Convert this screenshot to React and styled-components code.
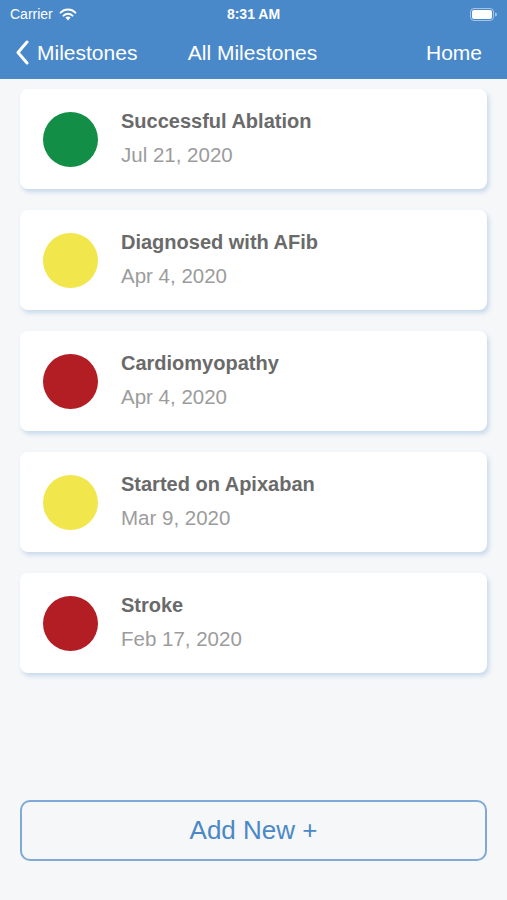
import React from "react";
import styled, { createGlobalStyle } from "styled-components";

const milestones = [
  { title: "Successful Ablation", date: "Jul 21, 2020", color: "#138e47" },
  { title: "Diagnosed with AFib", date: "Apr 4, 2020", color: "#f1e64b" },
  { title: "Cardiomyopathy", date: "Apr 4, 2020", color: "#b21e23" },
  { title: "Started on Apixaban", date: "Mar 9, 2020", color: "#f1e64b" },
  { title: "Stroke", date: "Feb 17, 2020", color: "#b21e23" },
];

const GlobalStyle = createGlobalStyle`
  * { box-sizing: border-box; }
  html, body { margin: 0; padding: 0; }
  body {
    font-family: "Liberation Sans", Arial, sans-serif;
    background: #f5f7f9;
  }
`;

const Page = styled.div`
  width: 507px;
  height: 900px;
  display: flex;
  flex-direction: column;
  background: #f5f7f9;
  overflow: hidden;
`;

const Header = styled.header`
  background: #4a89c9;
  color: #fff;
  height: 79px;
  display: flex;
  flex-direction: column;
`;

const StatusBar = styled.div`
  height: 28px;
  display: grid;
  grid-template-columns: 1fr auto 1fr;
  align-items: center;
  padding: 0 10px;
  font-size: 14px;
  .left {
    display: flex;
    align-items: center;
    gap: 6px;
  }
  .time {
    font-weight: 700;
    font-size: 14px;
  }
  .right {
    display: flex;
    justify-content: flex-end;
  }
`;

const NavBar = styled.div`
  flex: 1;
  display: grid;
  grid-template-columns: 1fr auto 1fr;
  align-items: center;
  padding: 0 25px 2px 15px;
  font-size: 21px;
  .back {
    display: flex;
    align-items: center;
    gap: 7px;
  }
  .title {
    padding-left: 8px;
  }
  .home {
    text-align: right;
  }
`;

const List = styled.div`
  display: flex;
  flex-direction: column;
  gap: 21px;
  padding: 10px 20px 0 20px;
  flex: 1;
`;

const Card = styled.div`
  height: 100px;
  background: #fff;
  border-radius: 8px;
  box-shadow: 2px 3px 4px rgba(120, 160, 210, 0.35);
  display: flex;
  align-items: center;
  padding: 0 0 0 23px;
  gap: 23px;
`;

const Dot = styled.div`
  width: 55px;
  height: 55px;
  border-radius: 50%;
  background: ${(p) => p.$color};
  flex-shrink: 0;
`;

const Text = styled.div`
  display: flex;
  flex-direction: column;
  gap: 10px;
  margin-top: -2px;
`;

const Title = styled.div`
  font-size: 20px;
  font-weight: 700;
  color: #6a6a6a;
`;

const DateText = styled.div`
  font-size: 20.5px;
  color: #9c9c9c;
`;

const Footer = styled.div`
  padding: 0 20px 39px 20px;
`;

const AddButton = styled.button`
  width: 100%;
  height: 61px;
  background: transparent;
  border: 2px solid #7fa9d6;
  border-radius: 10px;
  color: #4a88c6;
  font-family: "Liberation Sans", Arial, sans-serif;
  font-size: 26px;
  padding-bottom: 2px;
`;

const Wifi = () => (
  <svg width="18" height="13" viewBox="0 0 18 13">
    <path d="M9 12.5 L11.6 9.6 A3.8 3.8 0 0 0 6.4 9.6 Z" fill="#fff" />
    <path d="M4.5 7.6 A6.5 6.5 0 0 1 13.5 7.6" stroke="#fff" strokeWidth="2" fill="none" strokeLinecap="round" />
    <path d="M1.6 4.6 A10.5 10.5 0 0 1 16.4 4.6" stroke="#fff" strokeWidth="2" fill="none" strokeLinecap="round" />
  </svg>
);

const Battery = () => (
  <svg width="27" height="13" viewBox="0 0 27 13">
    <rect x="0.5" y="0.5" width="23" height="12" rx="3.5" fill="none" stroke="rgba(255,255,255,0.5)" />
    <rect x="2" y="2" width="20" height="9" rx="2" fill="#fff" />
    <path d="M25 4.5 A2 2 0 0 1 25 8.5 Z" fill="rgba(255,255,255,0.5)" />
  </svg>
);

const Chevron = () => (
  <svg width="15" height="25" viewBox="0 0 15 25">
    <path d="M12 2 L3 12.5 L12 23" stroke="#fff" strokeWidth="3" fill="none" strokeLinecap="round" strokeLinejoin="round" />
  </svg>
);

export default function App() {
  return (
    <Page>
      <GlobalStyle />
      <Header>
        <StatusBar>
          <div className="left">
            Carrier <Wifi />
          </div>
          <div className="time">8:31 AM</div>
          <div className="right">
            <Battery />
          </div>
        </StatusBar>
        <NavBar>
          <div className="back">
            <Chevron />
            Milestones
          </div>
          <div className="title">All Milestones</div>
          <div className="home">Home</div>
        </NavBar>
      </Header>
      <List>
        {milestones.map((m, i) => (
          <Card key={i}>
            <Dot $color={m.color} />
            <Text>
              <Title>{m.title}</Title>
              <DateText>{m.date}</DateText>
            </Text>
          </Card>
        ))}
      </List>
      <Footer>
        <AddButton>Add New +</AddButton>
      </Footer>
    </Page>
  );
}
